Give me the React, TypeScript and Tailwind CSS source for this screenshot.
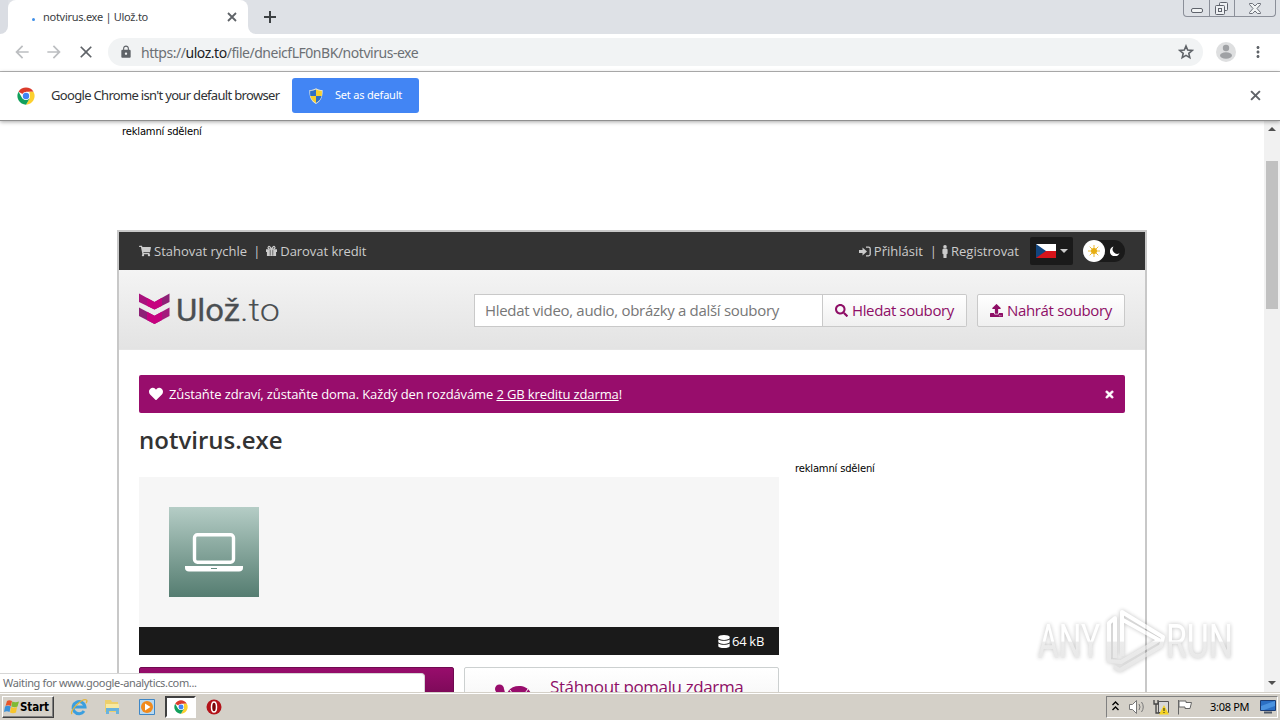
import type { ReactNode } from "react";
import { FaShoppingCart, FaMale, FaSearch, FaUpload, FaHeart, FaTimes, FaDatabase } from "react-icons/fa";
import { MdArrowBack, MdArrowForward, MdClose, MdLock, MdMoreVert } from "react-icons/md";

const ChromeLogo = ({ className }: { className?: string }) => (
  <svg viewBox="0 0 48 48" className={className}>
    <circle cx="24" cy="24" r="23" fill="#fff" />
    <path d="M24 24 4.100 12.500A23 23 0 0 1 43.900 12.500H24z" fill="#db3b2b" />
    <path d="M43.900 12.500A23 23 0 0 1 24 47L34 30 33 12.500z" fill="#fcd02f" />
    <path d="M4.100 12.500A23 23 0 0 0 24 47L34 30 24 34 14 30z" fill="#12a05c" />
    <circle cx="24" cy="24" r="10.500" fill="#fff" />
    <circle cx="24" cy="24" r="8.500" fill="#4285f4" />
  </svg>
);

const ShieldIcon = () => (
  <svg viewBox="0 0 16 18" className="h-[16px] w-[14px]">
    <path d="M8 0c2 1.500 4.500 2 7.500 2 .5 7-1.500 12.500-7.500 16C2 14.500 0 9 .5 2 3.500 2 6 1.500 8 0z" fill="#e8e8d8" />
    <path d="M8 1.500V9H1.500C1.200 7 1.200 5 1.400 3 4 3 6 2.500 8 1.500zM8 9h6.400c-.8 3.400-2.900 6-6.400 8z" fill="#2f6fc4" />
    <path d="M8 1.500V9h6.500c.3-2 .3-4 .1-6C12 3 10 2.500 8 1.500zM8 9H1.600c.8 3.400 2.900 6 6.400 8z" fill="#f6cf2d" />
  </svg>
);

const CloseIcon = ({ className }: { className?: string }) => (
  <svg viewBox="0 0 10 10" className={className} stroke="#5f6368" strokeWidth="1.800">
    <path d="M1 1l8 8M9 1L1 9" />
  </svg>
);

const SignInIcon = () => (
  <svg viewBox="0 0 12 11" className="h-[11px] w-3" fill="none">
    <path d="M0 4h3.500V1.500L8 5.500l-4.500 4V7H0z" fill="#ccc" />
    <path d="M7 1.200h2.500c1 0 1.700.5 1.700 1.500v5.600c0 1-.7 1.500-1.700 1.500H7" stroke="#ccc" strokeWidth="1.300" />
  </svg>
);

const GiftIcon = () => (
  <svg viewBox="0 0 12 12" className="h-3 w-[11px]" fill="none" stroke="#ccc">
    <path d="M0 4h12v3h-1v4.500H1V7H0z" fill="#ccc" stroke="none" />
    <path d="M6 4C4.500 1 3.500.7 2.800 1.200 1.500 2.200 2.500 3.800 4 3.800h4c1.500 0 2.500-1.600 1.200-2.600C8.500.7 7.500 1 6 4z" strokeWidth="1.300" />
    <path d="M4.600 5v6M7.400 5v6" stroke="#333" strokeWidth="0.700" />
  </svg>
);

const WindowControls = () => (
  <div className="absolute top-0 right-[4px] flex h-[17px] w-[93px] rounded-b-[4px] border border-t-0 border-[#8b8f99] text-[#6d717a]">
    <div className="flex w-[26px] justify-center border-r border-[#8b8f99]">
      <div className="mt-[8px] h-[5px] w-3 rounded-[2px] border border-[#5f636c] bg-[#f1f3f4]" />
    </div>
    <div className="flex w-[25px] justify-center border-r border-[#8b8f99] pt-[2px] pr-[2px]">
      <svg viewBox="0 0 13 13" className="h-[13px] w-[13px]" fill="#eef0f3" stroke="#5f636c">
        <rect x="4.500" y="0.500" width="8" height="8" rx="1" />
        <rect x="0.500" y="3.500" width="9" height="9" rx="1" />
        <rect x="3.500" y="6.500" width="3" height="3" />
      </svg>
    </div>
    <div className="flex flex-1 items-center justify-center">
      <svg viewBox="0 0 12 11" className="h-[11px] w-3" fill="#f1f3f4" stroke="#6d717a">
        <path d="M.5.5h3L6 3 8.500.5h3v1L8 5.500l3.500 4v1h-3L6 8l-2.500 2.500h-3v-1L4 5.500.5 1.500z" />
      </svg>
    </div>
  </div>
);

const TabStrip = () => (
  <div className="relative flex h-[34px] shrink-0 bg-[#dee1e6]">
    <div className="w-2 bg-white">
      <div className="h-full rounded-br-[8px] bg-[#dadde3]" />
    </div>
    <div className="flex w-[240px] items-center rounded-t-[8px] bg-white pl-6 text-[11px] text-[#3c4043]">
      <span className="mt-[5px] h-[3px] w-[3px] rounded-full bg-[#3f8fe8]" />
      <span className="ml-2 w-[184px] tracking-[-0.28px] whitespace-nowrap">notvirus.exe | Ulož.to</span>
      <CloseIcon className="h-[10px] w-[10px]" />
    </div>
    <div className="w-2 bg-white">
      <div className="h-full rounded-bl-[8px] bg-[#dee1e6]" />
    </div>
    <svg viewBox="0 0 12 12" className="mt-[11px] ml-2 h-3 w-3" stroke="#3c4043" strokeWidth="2">
      <path d="M6 0v12M0 6h12" />
    </svg>
    <WindowControls />
  </div>
);

const Toolbar = () => (
  <div className="flex h-[38px] shrink-0 items-center border-b border-[#b6b6b6] bg-white pb-px text-[#5f6368]">
    <MdArrowBack className="ml-3 h-5 w-5 text-[#bcbec1]" />
    <MdArrowForward className="ml-3 h-5 w-5 text-[#bcbec1]" />
    <MdClose className="ml-3 h-5 w-5" />
    <div className="ml-3 flex h-7 w-[1095px] items-center rounded-full bg-[#f1f3f4]">
      <MdLock className="ml-[11px] h-[14px] w-[14px]" />
      <span className="ml-2 flex-1 text-[14px] tracking-[-0.47px] whitespace-nowrap text-[#6c7075]">
        https://<span className="text-[#202124]">uloz.to</span>/file/dneicfLF0nBK/notvirus-exe
      </span>
      <svg viewBox="0 0 16 16" className="mr-[9px] h-4 w-4" fill="none" stroke="#5f6368" strokeWidth="1.600">
        <path d="M8 2l1.700 4.100 4.400.4-3.300 2.900 1 4.300L8 11.400l-3.800 2.300 1-4.300L1.900 6.500l4.400-.4z" />
      </svg>
    </div>
    <svg viewBox="0 0 20 20" className="ml-[13px] h-5 w-5">
      <circle cx="10" cy="10" r="10" fill="#dedfe0" />
      <circle cx="10" cy="6" r="3.200" fill="#9fa1a4" />
      <ellipse cx="10" cy="13.500" rx="6" ry="3.200" fill="#9fa1a4" />
    </svg>
    <MdMoreVert className="ml-[13px] h-[18px] w-[18px]" />
  </div>
);

const InfoBar = () => (
  <div className="relative z-10 flex h-[49px] shrink-0 items-center border-b border-[#8f8f8f] bg-white pb-px shadow-[0_1px_4px_rgba(0,0,0,0.35)]">
    <ChromeLogo className="ml-[17px] h-[18px] w-[18px]" />
    <span className="ml-4 w-[241px] text-[13px] tracking-[-0.68px] whitespace-nowrap text-[#303235]">
      Google Chrome isn't your default browser
    </span>
    <button className="flex h-[35px] w-[127px] items-center rounded-[3px] bg-[#4285f4] pl-[17px] text-[11px] tracking-[-0.2px] text-white">
      <ShieldIcon />
      <span className="ml-3 whitespace-nowrap">Set as default</span>
    </button>
    <CloseIcon className="mr-[19px] ml-auto h-[11px] w-[11px]" />
  </div>
);

const TopNav = () => (
  <nav className="flex h-[38px] items-center bg-[#333] px-5 text-[13px] whitespace-nowrap text-[#ccc]">
    <FaShoppingCart className="h-3 w-3" />
    <span className="ml-[3px] pt-[2px]">Stahovat rychle</span>
    <span className="mr-[6px] ml-[6px] pt-[2px]">|</span>
    <GiftIcon />
    <span className="ml-[3px] pt-[2px] tracking-[-0.05px]">Darovat kredit</span>
    <div className="ml-auto flex items-center">
      <SignInIcon />
      <span className="ml-[3px] pt-[2px]">Přihlásit</span>
      <span className="mr-[2px] ml-[7px] pt-[2px]">|</span>
      <FaMale className="h-[13px] w-3 stroke-[#ccc] stroke-[12]" />
      <span className="w-[69px] pt-[2px]">Registrovat</span>
      <div className="ml-[10px] flex h-7 w-[43px] items-center rounded-[2px] bg-[#1a1a1a] pl-[6px]">
        <svg viewBox="0 0 20 14" className="h-[14px] w-5">
          <path d="M0 0h20v7H0z" fill="#fff" />
          <path d="M0 7h20v7H0z" fill="#d7141a" />
          <path d="M0 0l10 7-10 7z" fill="#11457e" />
        </svg>
        <span className="ml-1 border-x-4 border-t-4 border-x-transparent border-t-[#ccc]" />
      </div>
      <div className="ml-[10px] flex h-[22px] w-[42px] items-center rounded-full bg-[#1a1a1a]">
        <span className="flex h-[22px] w-[22px] items-center justify-center rounded-full bg-white">
          <svg viewBox="0 0 14 14" className="h-3 w-3">
            <circle cx="7" cy="7" r="3.500" fill="#e7ae13" />
            <path d="M7 0v14M0 7h14M2 2l10 10M12 2 2 12" stroke="#e7ae13" strokeWidth="1" />
          </svg>
        </span>
        <svg viewBox="0 0 10 10" className="ml-[5px] h-[10px] w-[10px]">
          <path d="M3.500.5a5 5 0 1 0 6 6.700A4.600 4.600 0 0 1 3.500.5z" fill="#fff" />
        </svg>
      </div>
    </div>
  </nav>
);

const UlozLogo = () => (
  <svg viewBox="0 0 142 48" className="mb-1 h-12 w-[142px] overflow-visible">
    <path d="M0 8.500l15.500 8.500V24.500L0 17z" fill="#a8127d" />
    <path d="M30.500 8.500l-15 8.500V24.500l15-7.500z" fill="#8d2176" />
    <path d="M8 13l7.500 4L23 12.800v8L15.500 24.500 8 20.800z" fill="#c6017f" />
    <path d="M0 22.500l15.500 8.300V39L0 31z" fill="#8d2176" />
    <path d="M30.500 22.500l-15 8.300V39l15-8z" fill="#a31a7b" />
    <path d="M8 26.800l7.500 4 7.500-4V35l-7.500 4L8 35z" fill="#c6017f" />
    <text x="37" y="36" fontFamily="Roboto, sans-serif" fontSize="31" fontWeight="400" fill="#4b4f52" stroke="#4b4f52" strokeWidth="0.300" textLength="64" lengthAdjust="spacingAndGlyphs">
      Ulož
    </text>
    <text x="101" y="36" fontFamily="Roboto, sans-serif" fontSize="31" fontWeight="300" fill="#4b4f52" textLength="40" lengthAdjust="spacingAndGlyphs">
      .to
    </text>
  </svg>
);

const SearchHeader = () => (
  <header className="flex h-20 items-center border-b border-[#e6e6e6] bg-linear-to-b from-[#f4f4f4] to-[#e3e3e3] px-5 pt-[2px] text-[15px] whitespace-nowrap">
    <UlozLogo />
    <div className="ml-auto flex h-[33px]">
      <div className="flex w-[349px] items-center border border-[#c9c9c9] bg-white pl-[10px] tracking-[-0.31px] text-[#777]">
        Hledat video, audio, obrázky a další soubory
      </div>
      <button className="flex w-[144px] items-center rounded-r-[2px] border border-l-0 border-[#c9c9c9] bg-linear-to-b from-white to-[#f0f0f0] pl-3 text-[#8e0e66]">
        <FaSearch className="h-[13px] w-[13px]" />
        <span className="ml-1 pb-px tracking-[-0.38px]">Hledat soubory</span>
      </button>
      <button className="ml-[10px] flex w-[148px] items-center rounded-[2px] border border-[#c9c9c9] bg-linear-to-b from-white to-[#f0f0f0] pl-3 text-[#8e0e66]">
        <FaUpload className="h-[13px] w-[13px]" />
        <span className="ml-1 tracking-[-0.34px]">Nahrát soubory</span>
      </button>
    </div>
  </header>
);

const FileCard = () => (
  <div className="w-[640px]">
    <div className="h-[150px] bg-[#f6f6f6] p-[30px]">
      <div className="flex h-[90px] w-[90px] items-center justify-center bg-linear-to-b from-[#b5cdc6] to-[#557d71]">
        <svg viewBox="0 0 58 39" className="h-[39px] w-[58px]">
          <rect x="9.500" y="1.700" width="39" height="27.500" rx="3" fill="none" stroke="#fff" strokeWidth="3.400" />
          <path d="M0 33h58v2c0 2-1.500 3.500-4 3.500H4C1.500 38.500 0 37 0 35z" fill="#fff" />
          <path d="M26 35.500h6" stroke="#658b80" />
        </svg>
      </div>
    </div>
    <div className="flex h-7 items-center justify-end bg-[#1a1a1a] pr-[15px] text-[13px] text-white">
      <FaDatabase className="h-[13px] w-3" />
      <span className="ml-[2px] pt-[2px] tracking-[-0.3px]">64 kB</span>
    </div>
    <div className="mt-3 flex gap-[10px]">
      <div className="h-[60px] w-[315px] rounded-[2px] border border-[#6f0a50] bg-linear-to-b from-[#980d6c] to-[#5c0641]" />
      <div className="flex h-[60px] w-[315px] rounded-[2px] border border-[#ccd0d0] bg-linear-to-b from-white to-[#f0f0f0] pl-[29px] text-[17px] text-[#8e0e66]">
        <svg viewBox="0 0 42 30" className="mt-4 h-[30px] w-[42px]" fill="#980d6c">
          <circle cx="5.500" cy="5" r="4.500" />
          <path d="M2 5h8l3 10H8z" />
          <path d="M12 12C14 5 19 2 25 2s11 3 13 10z" />
          <path d="M16 6l4 6M34 5l-5 7" stroke="#fff" />
        </svg>
        <span className="mt-[6px] ml-[14px] tracking-[-0.38px] whitespace-nowrap">Stáhnout pomalu zdarma</span>
      </div>
    </div>
  </div>
);

const PageContent = () => (
  <main className="flex-1 overflow-hidden bg-white">
    <div className="mt-1 ml-[122px] h-[105px] font-['DejaVu_Sans',sans-serif] text-[10px] leading-[13px] tracking-[-0.18px] text-black">
      reklamní sdělení
    </div>
    <div className="ml-[117px] w-[1030px] border-2 border-[#c8c8c8] font-['Open_Sans',sans-serif]">
      <TopNav />
      <SearchHeader />
      <div className="px-5 pt-[25px]">
        <div className="flex h-[38px] items-center rounded-[2px] bg-[#980d6c] px-[10px] text-[13px] text-white">
          <FaHeart className="h-[14px] w-[14px]" />
          <p className="ml-[6px] pt-[2px] tracking-[-0.12px] whitespace-nowrap">
            Zůstaňte zdraví, zůstaňte doma. Každý den rozdáváme <span className="underline">2 GB kreditu zdarma</span>!
          </p>
          <FaTimes className="ml-auto h-[11px] w-[11px] stroke-white stroke-[30]" />
        </div>
        <div className="flex">
          <div>
            <h1 className="h-16 pt-[10px] text-[24px] leading-[34px] font-semibold text-[#333]">notvirus.exe</h1>
            <FileCard />
          </div>
          <div className="mt-[49px] ml-4 font-['DejaVu_Sans',sans-serif] text-[10px] leading-[13px] tracking-[-0.18px] text-black">
            reklamní sdělení
          </div>
        </div>
      </div>
    </div>
  </main>
);

const Scrollbar = () => (
  <div className="flex w-4 flex-col items-center bg-[#f1f1f1]">
    <span className="mt-[6px] border-x-4 border-b-4 border-x-transparent border-b-[#505050]" />
    <div className="mt-[30px] h-[148px] w-3 bg-[#c1c1c1]" />
    <span className="mt-auto mb-[7px] border-x-4 border-t-4 border-x-transparent border-t-[#505050]" />
  </div>
);

const Watermark = () => (
  <div className="absolute top-[606px] left-[1034px] opacity-70 drop-shadow-[0_0_2px_rgba(0,0,0,0.35)]">
    <svg viewBox="0 0 204 70" className="h-[70px] w-[204px]" fill="none" stroke="url(#fade)">
      <defs>
        <linearGradient id="fade" gradientUnits="userSpaceOnUse" x1="0" y1="0" x2="0" y2="70">
          <stop offset="0.500" stopColor="#fff" />
          <stop offset="0.520" stopColor="#e4e4e4" />
          <stop offset="1" stopColor="#dcdcdc" />
        </linearGradient>
      </defs>
      <g fill="url(#fade)" stroke="none" fontFamily="Roboto, sans-serif" fontSize="48">
        <text x="4" y="52" textLength="62" lengthAdjust="spacingAndGlyphs">ANY</text>
        <text x="132" y="52" textLength="67" lengthAdjust="spacingAndGlyphs">RUN</text>
      </g>
      <g strokeWidth="4" strokeLinejoin="round">
        <path d="M88 50V6l41 25-2 9-41 24-6-3" />
        <path d="M81 52V12l-6 5v38l12 1 38-22-36-20" />
      </g>
    </svg>
  </div>
);

const QuickLaunch = () => (
  <div className="ml-4 flex items-center">
    <svg viewBox="0 0 18 18" className="h-[18px] w-[18px]" fill="none">
      <path d="M14 13a6 6 0 1 1 1-4H4" stroke="#3b9fdf" strokeWidth="3" />
      <path d="M2 16C-1 13 12 0 16.500 2c1 .5 0 2.500-.5 3" stroke="#e2b53c" strokeWidth="1.300" />
    </svg>
    <svg viewBox="0 0 16 16" className="ml-4 h-4 w-4">
      <path d="M1 1h6l1 2h6v10H1z" fill="#edcf6c" />
      <path d="M2 5h13v7H2z" fill="#f9e9a0" />
      <path d="M2 9h13v6h-3v-3H5v3H2z" fill="#69b3dd" />
    </svg>
    <svg viewBox="0 0 16 16" className="ml-[19px] h-4 w-4">
      <path d="M.5.5h15v15H.5z" fill="#b8d9f1" stroke="#3f87c6" />
      <circle cx="8" cy="8" r="6" fill="#f18a1c" />
      <path d="M6 4.500l5.500 3.500L6 11.500z" fill="#fff" />
    </svg>
    <div className="ml-[10px] flex h-[22px] w-[31px] items-center justify-center border-2 border-t-[#404040] border-r-white border-b-white border-l-[#404040] bg-white">
      <ChromeLogo className="h-[14px] w-[14px]" />
    </div>
    <svg viewBox="0 0 16 16" className="ml-[10px] h-4 w-4">
      <circle cx="8" cy="8" r="7.500" fill="#b3131a" />
      <ellipse cx="8" cy="8" rx="2.500" ry="5" fill="#7b0508" stroke="#fff" strokeWidth="1.500" />
    </svg>
  </div>
);

const Tray = () => (
  <div className="mr-[2px] ml-auto flex h-[22px] w-[172px] items-center border border-t-[#808080] border-r-white border-b-white border-l-[#808080] text-[11px] text-black">
    <svg viewBox="0 0 7 10" className="mb-[2px] ml-[5px] h-[10px] w-[7px]" fill="none" stroke="#000" strokeWidth="1.400">
      <path d="M.5 4l3-3 3 3M.5 9l3-3 3 3" />
    </svg>
    <svg viewBox="0 0 16 16" className="ml-[10px] h-4 w-4" stroke="#777" fill="#fff">
      <path d="M.5 5.500h3l4-4v13l-4-4h-3z" />
      <path d="M10 5q2 3 0 6M12.500 3q3.500 5 0 10" fill="none" />
    </svg>
    <svg viewBox="0 0 16 16" className="ml-[8px] h-4 w-4">
      <path d="M5.500 2.500h10v11h-10z" fill="#d8d8d8" stroke="#555" />
      <path d="M1 1v4h4V1M3 5v9h4" fill="none" stroke="#444" strokeWidth="1.300" />
      <path d="M11 6l5 9.500H6z" fill="#f4d222" />
      <path d="M11 9v3M11 13v1" stroke="#222" />
    </svg>
    <svg viewBox="0 0 16 16" className="ml-2 h-4 w-4" fill="#fff" stroke="#666">
      <path d="M1.500 1v14.500M2 2h7v1.500h5.500L13 9.500H8V8H2z" />
    </svg>
    <span className="ml-[17px] w-[40px] tracking-[-0.3px] whitespace-nowrap">3:08 PM</span>
    <svg viewBox="0 0 16 14" className="ml-[10px] h-[14px] w-4">
      <path d="M.5.5h15v10H.5z" fill="#2b6fc4" stroke="#1b3c74" />
      <path d="M1 6L15 1v5L4 10H1z" fill="#4b93e0" />
      <path d="M4 11.500h8v2H4z" fill="#4e5866" />
    </svg>
  </div>
);

const Taskbar = () => (
  <div className="z-10 flex h-7 shrink-0 items-center border-t border-[#d4d0c8] bg-[#d4d0c8] pt-px shadow-[inset_0_1px_0_#fff]">
    <button className="ml-[2px] flex h-[22px] w-[52px] items-center border border-t-white border-r-[#404040] border-b-[#404040] border-l-white font-['DejaVu_Sans_Condensed','DejaVu_Sans',sans-serif] text-[11px] font-bold tracking-[-0.1px] text-black shadow-[inset_-1px_-1px_0_#808080]">
      <svg viewBox="0 0 16 16" className="ml-px h-4 w-4">
        <path d="M3 2q2-1.500 5 0L7 7Q4 5.500 1.500 7z" fill="#e7562b" />
        <path d="M8.300 2.500q3 1.500 6.700 0L13.500 7.500Q11 9 7.300 7.500z" fill="#7fba35" />
        <path d="M1 7.500q3-1.500 5.800 0L5.500 13Q3 11.500 0 13z" fill="#3a91d9" />
        <path d="M7 8q3 1.500 6 0L12 13.500Q9 15 6 13.500z" fill="#f7c52d" />
      </svg>
      <span className="pt-px text-[11.500px]">Start</span>
    </button>
    <QuickLaunch />
    <Tray />
  </div>
);

const Desktop = ({ children }: { children: ReactNode }) => (
  <div className="relative flex h-[720px] w-[1280px] flex-col overflow-hidden bg-white font-['Noto_Sans',sans-serif]">{children}</div>
);

export default function App() {
  return (
    <Desktop>
      <TabStrip />
      <Toolbar />
      <InfoBar />
      <div className="flex min-h-0 flex-1">
        <PageContent />
        <Scrollbar />
      </div>
      {/* status bubble over the page */}
      <div className="absolute top-[673px] left-0 h-[20px] w-[425px] rounded-tr-[4px] border-t border-r border-[#d6d6d6] bg-white pl-[3px] text-[11px] leading-[18px] tracking-[-0.34px] whitespace-nowrap text-[#6b6e72]">
        Waiting for www.google-analytics.com...
      </div>
      <Watermark />
      <Taskbar />
    </Desktop>
  );
}
